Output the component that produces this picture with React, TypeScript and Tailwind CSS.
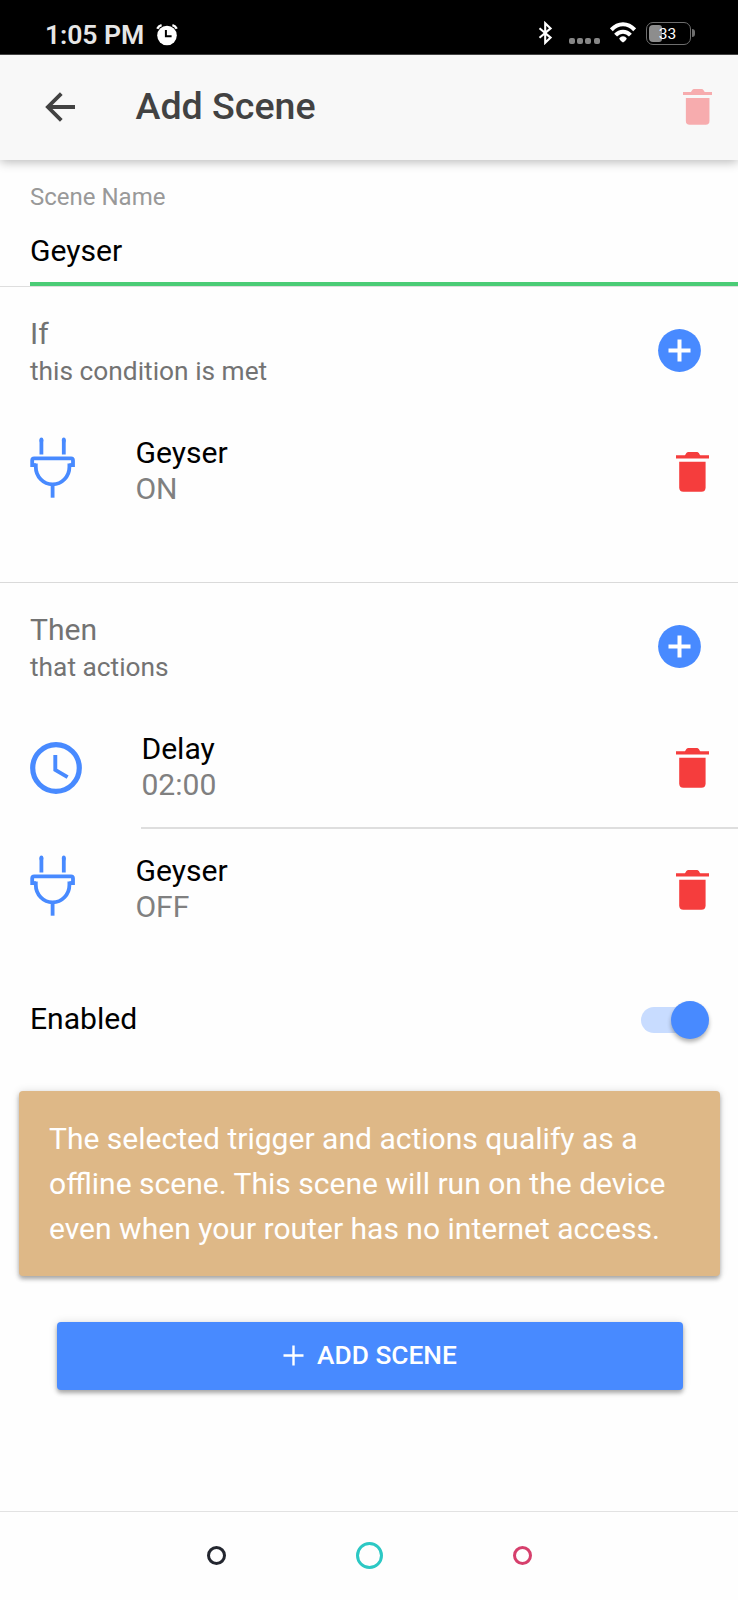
import type { ReactNode } from "react";

function TrashIcon({ className }: { className: string }) {
  return (
    <svg viewBox="0 0 33 40" className={className} fill="currentColor">
      <path d="M0 3.2H8.8C9.8 2.6 10.2 0 12.6 0H20.6C23 0 23.4 2.6 24.4 3.2H33V6.6H0Z" />
      <path d="M3.2 9.8H29.6V35.6Q29.6 39.8 25.4 39.8H7.4Q3.2 39.8 3.2 35.6Z" />
    </svg>
  );
}

function PlugIcon() {
  return (
    <svg
      viewBox="0 0 46 62"
      className="w-[46px] h-[62px] -mt-[5px]"
      fill="none"
      stroke="#488aff"
      strokeWidth="3.8"
    >
      <path d="M11.4 2.4V17.5M33.8 2.4V17.5" />
      <path d="M11.4 2.4V4M33.8 2.4V4" strokeLinecap="round" />
      <path d="M5.9 28.1H2.2V23.4Q2.2 21.4 4.2 21.4H41Q43 21.4 43 23.4V28.1H39.4" />
      <path d="M5.8 26.4V30C5.8 39.5 13.3 47.3 22.6 47.3S39.4 39.5 39.4 30V26.4" />
      <path d="M22.6 47V60.7" />
    </svg>
  );
}

function ClockIcon() {
  return (
    <svg
      viewBox="0 0 52 52"
      className="w-[52px] h-[52px] mt-[3px]"
      fill="none"
      stroke="#488aff"
    >
      <circle cx="26" cy="26" r="23.3" strokeWidth="5.2" />
      <path d="M25.3 13V27.9L37.6 35.1" strokeWidth="3.9" />
    </svg>
  );
}

function AddButton() {
  return (
    <button className="mr-[37px]">
      <svg viewBox="0 0 43 43" className="block w-[43px] h-[43px]">
        <circle cx="21.5" cy="21.5" r="21.4" fill="#488aff" />
        <path d="M21.5 10.5V32.5M10.5 21.5H32.5" stroke="#fff" strokeWidth="4" />
      </svg>
    </button>
  );
}

function StatusBar() {
  return (
    <div className="flex h-[54px] shrink-0 bg-black text-[#e6e6e6] pl-[45px] pr-[47px] pt-[14px]">
      <span className="text-[26.6px] leading-[42px] font-semibold tracking-[-0.1px] w-[111px] whitespace-nowrap">
        1:05 PM
      </span>
      <svg viewBox="0 0 22 22" className="w-[22px] h-[22px] mt-[10px] text-white">
        <circle cx="11" cy="11.5" r="9.8" fill="currentColor" />
        <path
          d="M1.3 4.8Q2.6 2 5.6 1.2M20.7 4.8Q19.4 2 16.4 1.2"
          stroke="currentColor"
          strokeWidth="2.4"
          fill="none"
        />
        <path d="M9.9 6V12.2H15.6" stroke="#000" strokeWidth="2" fill="none" />
      </svg>
      <div className="ml-auto flex items-start">
        <svg viewBox="0 0 15 24" className="w-[15px] h-[24px] mt-[7px]">
          <path
            d="M1.5 7.2L12.6 16.6L7.2 21.8V2.2L12.6 7.4L1.5 16.8"
            fill="none"
            stroke="#fff"
            strokeWidth="2.1"
          />
        </svg>
        <div className="flex gap-[2.3px] ml-[15.5px] mt-[24px]">
          <span className="size-[6px] rounded-[2px] bg-[#868686]" />
          <span className="size-[6px] rounded-[2px] bg-[#868686]" />
          <span className="size-[6px] rounded-[2px] bg-[#868686]" />
          <span className="size-[6px] rounded-[2px] bg-[#868686]" />
        </div>
        <svg
          viewBox="0 0 26 21"
          className="w-[26px] h-[21px] ml-[10px] mr-[1px] mt-[8px]"
          fill="none"
          stroke="#fff"
          strokeWidth="4"
        >
          <path d="M1.3 7.8Q6.4 2.2 13 2.2T24.7 7.8" />
          <path d="M5.6 13.2Q8.8 9.8 13 9.8T20.4 13.2" />
          <path
            d="M13 14.3Q15.4 14.3 16.7 16.2Q17 17.6 13 20.4Q9 17.6 9.3 16.2Q10.6 14.3 13 14.3Z"
            fill="#fff"
            stroke="none"
          />
        </svg>
        <div className="relative flex items-center justify-center ml-[9.5px] mt-[8px] w-[45px] h-[23px] rounded-[7px] border-[1.5px] border-[#6e6e6e]">
          <span className="absolute left-[2px] top-[2px] w-[13px] h-[17px] rounded-l-[4px] rounded-r-[3px] bg-[#8d8d8d]" />
          <span className="absolute -right-[5px] top-[6px] w-[3px] h-[8px] rounded-r-full bg-[#6e6e6e]" />
          <span className="relative left-[-1px] top-[1px] text-[15.5px] leading-none text-white">
            33
          </span>
        </div>
      </div>
    </div>
  );
}

function SectionHeader({ title, text }: { title: string; text: string }) {
  return (
    <div className="flex items-center justify-between h-[126px] pl-[30px] text-[#737373]">
      <div className="pt-[2px]">
        <h2 className="text-[30.1px] leading-[36px]">{title}</h2>
        <p className="text-[26.3px] leading-[32px] mt-[3px]">{text}</p>
      </div>
      <AddButton />
    </div>
  );
}

function SceneItem({
  icon,
  name,
  value,
}: {
  icon: ReactNode;
  name: string;
  value: string;
}) {
  return (
    <div className="flex items-center h-[115px] pl-[30px] pr-[29px]">
      {icon}
      <div className="ml-[59.4px] flex-1">
        <h3 className="text-[30.1px] leading-[36px] text-black">{name}</h3>
        <p className="text-[30.1px] leading-[35px] text-[#808080]">{value}</p>
      </div>
      <TrashIcon className="w-[33px] h-[40px] mt-[3px] text-[#f53d3d]" />
    </div>
  );
}

export default function App() {
  return (
    <div className="flex flex-col w-[738px] h-[1600px] bg-[#fefefe] font-[Roboto,sans-serif] overflow-hidden">
      <StatusBar />
      <header className="flex items-center h-[106px] shrink-0 pl-[45px] pr-[26px] pb-[1px] bg-[#f8f8f8] border-t border-[#444] shadow-[0_2px_10px_rgba(0,0,0,0.28)]">
        <svg
          viewBox="0 0 31 30"
          className="w-[31px] h-[30px]"
          fill="none"
          stroke="#424242"
          strokeWidth="3.8"
        >
          <path d="M30 15H3M16.3 1.6L2.9 15L16.3 28.4" />
        </svg>
        <h1 className="ml-[59.5px] pb-[2px] flex-1 text-[37.6px] leading-[44px] font-medium text-[#424242]">
          Add Scene
        </h1>
        <TrashIcon className="w-[29.5px] h-[36px] text-[#f7acae]" />
      </header>

      <div className="flex flex-col h-[126px] shrink-0 pt-[23px]">
        <label className="pl-[30px] text-[24px] leading-[28px] text-[#999]">
          Scene Name
        </label>
        <span className="pl-[30px] mt-[22px] text-[30.1px] leading-[36px] text-black">
          Geyser
        </span>
        <span className="ml-[30px] mt-auto h-[4px] bg-[#4bcc76]" />
      </div>
      <div className="h-px w-full shrink-0 bg-[#dedede]" />

      <section className="h-[296px] shrink-0 border-b border-[#dadada]">
        <SectionHeader title="If" text="this condition is met" />
        <SceneItem icon={<PlugIcon />} name="Geyser" value="ON" />
      </section>

      <section className="h-[376px] shrink-0">
        <SectionHeader title="Then" text="that actions" />
        <SceneItem icon={<ClockIcon />} name="Delay" value="02:00" />
        <div className="ml-[141px] mt-[3px] mb-[2px] h-[2px] bg-[#dedede]" />
        <SceneItem icon={<PlugIcon />} name="Geyser" value="OFF" />
      </section>

      <div className="flex items-center justify-between h-[122px] shrink-0 pl-[30px] pr-[29px]">
        <span className="pb-[2px] text-[30.1px] leading-[36px] text-black">
          Enabled
        </span>
        <div className="flex items-center justify-end w-[68px] h-[38px]">
          <span className="w-[60px] h-[26px] -mr-[30px] rounded-full bg-[#c8dcff]" />
          <span className="relative size-[38px] rounded-full bg-[#488aff] shadow-[0_3px_4px_rgba(0,0,0,0.3)]" />
        </div>
      </div>

      <div className="ml-[19px] mt-[10px] mr-[18px] h-[185px] shrink-0 rounded-[4px] bg-[#deb887] px-[30px] pt-[25px] shadow-[0_3px_4px_rgba(0,0,0,0.3),0_0_8px_rgba(0,0,0,0.12)]">
        <p className="text-[30.05px] leading-[45px] text-white">
          The selected trigger and actions qualify as a
          <br />
          offline scene. This scene will run on the device
          <br />
          even when your router has no internet access.
        </p>
      </div>

      <button className="flex items-center justify-center ml-[57px] mr-[55px] mt-[46px] pb-[2px] h-[68px] shrink-0 rounded-[4px] bg-[#488aff] text-white shadow-[0_3px_4px_rgba(0,0,0,0.3),0_0_8px_rgba(0,0,0,0.12)]">
        <svg viewBox="0 0 21 21" className="w-[21px] h-[21px] mr-[13px]">
          <path d="M10.5 .5V20.5M.5 10.5H20.5" stroke="#fff" strokeWidth="2.4" />
        </svg>
        <span className="text-[26.3px] leading-[32px] font-medium">
          ADD SCENE
        </span>
      </button>

      <nav className="flex items-center justify-center mt-auto pb-[1px] h-[89px] shrink-0 border-t border-[#e2e2e2]">
        <span className="size-[19px] rounded-full border-[3px] border-[#23262f]" />
        <span className="size-[27px] mx-[130px] rounded-full border-[3px] border-[#2cc8c4]" />
        <span className="size-[19px] rounded-full border-[3px] border-[#d63f6c]" />
      </nav>
    </div>
  );
}
